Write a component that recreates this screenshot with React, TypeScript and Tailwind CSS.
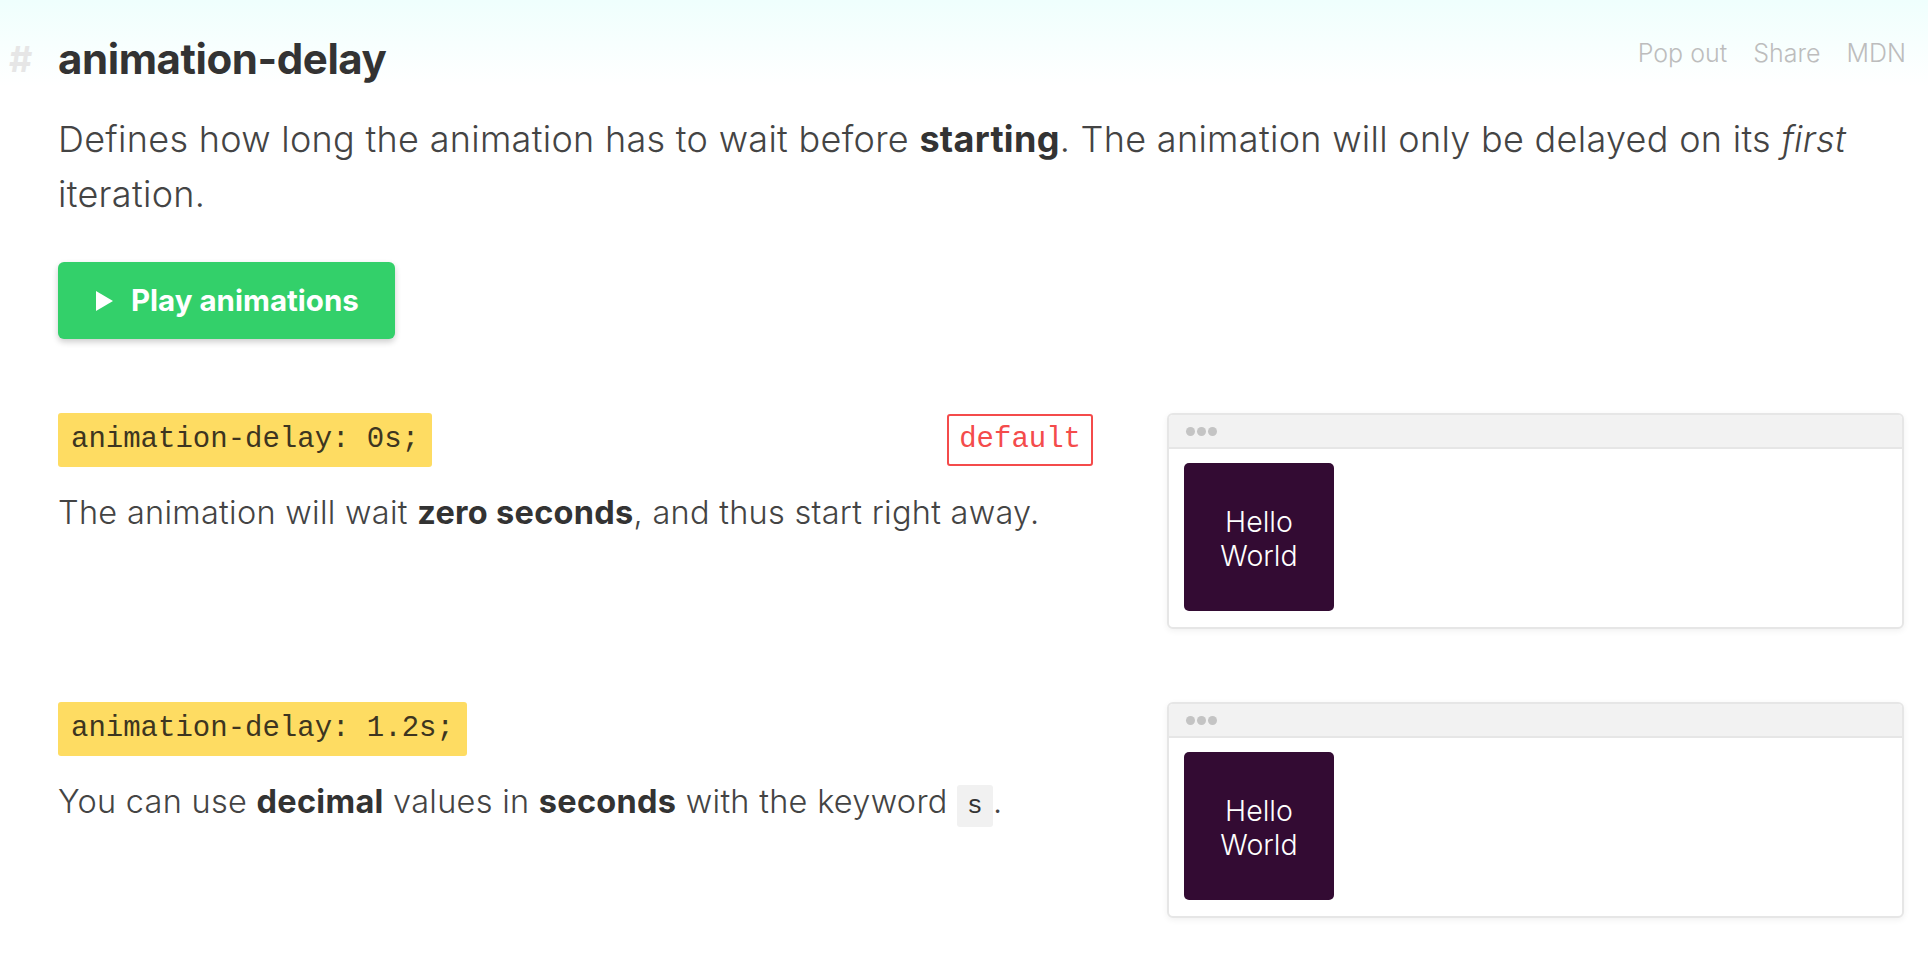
import React from 'react';

interface ExampleRowProps {
  code: string;
  isDefault?: boolean;
  children: React.ReactNode;
}

const BrowserPreview: React.FC = () => (
  <div className="w-[737px] shrink-0 overflow-hidden rounded-md border-2 border-[#e6e6e6] bg-white shadow-[0_2px_6px_rgba(0,0,0,0.06)]">
    <div className="flex h-[34px] items-center gap-[2px] border-b-2 border-[#e6e6e6] bg-[#f2f2f2] pl-[17px]">
      <span className="h-[9px] w-[9px] rounded-full bg-[#c4c4c4]" />
      <span className="h-[9px] w-[9px] rounded-full bg-[#c4c4c4]" />
      <span className="h-[9px] w-[9px] rounded-full bg-[#c4c4c4]" />
    </div>
    <div className="px-[15px] pt-[14px] pb-[16px]">
      <div className="flex h-[148px] w-[150px] items-center justify-center rounded-[5px] bg-[#330b33] pt-[3px] text-center text-[28.5px] leading-[34px] font-light text-white">
        Hello
        <br />
        World
      </div>
    </div>
  </div>
);

const ExampleRow: React.FC<ExampleRowProps> = ({ code, isDefault, children }) => (
  <div className="flex gap-[74px]">
    <div className="min-w-0 flex-1">
      <div className="flex items-start justify-between">
        <code className="flex h-[54px] items-center rounded-[3px] bg-[#fedc62] px-[13px] font-['Liberation_Mono',monospace] text-[29px] text-[#3d3520]">
          {code}
        </code>
        {isDefault && (
          <span className="mt-px flex h-[52px] items-center rounded-[3px] border-2 border-[#f44b4b] px-[10px] font-['Liberation_Mono',monospace] text-[29px] text-[#f44b4b]">
            default
          </span>
        )}
      </div>
      <p className="mt-[24px] text-[32.5px] leading-[44px] font-light tracking-[0.28px] text-[#444]">{children}</p>
    </div>
    <BrowserPreview />
  </div>
);

export default function App() {
  return (
    <div className="min-h-screen bg-white font-['Inter',sans-serif] text-[#333]">
      <header className="bg-linear-to-b from-[#effffd] to-white pt-[32px]">
        <div className="flex items-center pr-[22px]">
          <span className="w-[58px] pl-[9px] text-[36px] font-bold text-[#e6e6e6]">#</span>
          <h1 className="flex-1 text-[42px] leading-[50px] font-bold tracking-[-0.01em] text-[#333]">animation-delay</h1>
          <nav className="mb-[10px] flex gap-[26px] text-[25px] font-light text-[#bdbdbd]">
            <a>Pop out</a>
            <a>Share</a>
            <a>MDN</a>
          </nav>
        </div>
      </header>

      <main className="pr-[24px] pl-[58px]">
        <p className="mt-[26px] text-[36px] leading-[55px] font-light tracking-[0.3px] text-[#444]">
          Defines how long the animation has to wait before <strong className="font-bold text-[#333]">starting</strong>. The animation will only be delayed on its <em>first</em> iteration.
        </p>

        <button className="mt-[40px] flex h-[77px] w-[337px] items-center gap-[18px] rounded-md bg-[#33d06a] pl-[38px] text-[29.5px] font-bold text-white shadow-[0_3px_6px_rgba(0,0,0,0.2)]">
          <svg width="17" height="20" viewBox="0 0 17 20">
            <path d="M0 0 L17 10 L0 20 Z" fill="white" />
          </svg>
          Play animations
        </button>

        <div className="mt-[74px] flex flex-col gap-[73px]">
          <ExampleRow code="animation-delay: 0s;" isDefault>
            The animation will wait <strong className="font-bold text-[#333]">zero seconds</strong>, and thus start right away.
          </ExampleRow>
          <ExampleRow code="animation-delay: 1.2s;">
            You can use <strong className="font-bold text-[#333]">decimal</strong> values in <strong className="font-bold text-[#333]">seconds</strong> with the keyword{' '}
            <code className="rounded-[3px] bg-[#f1f1f1] px-[10px] py-[6px] font-['Liberation_Mono',monospace] text-[26px] text-[#333]">s</code>.
          </ExampleRow>
        </div>
      </main>
    </div>
  );
}
